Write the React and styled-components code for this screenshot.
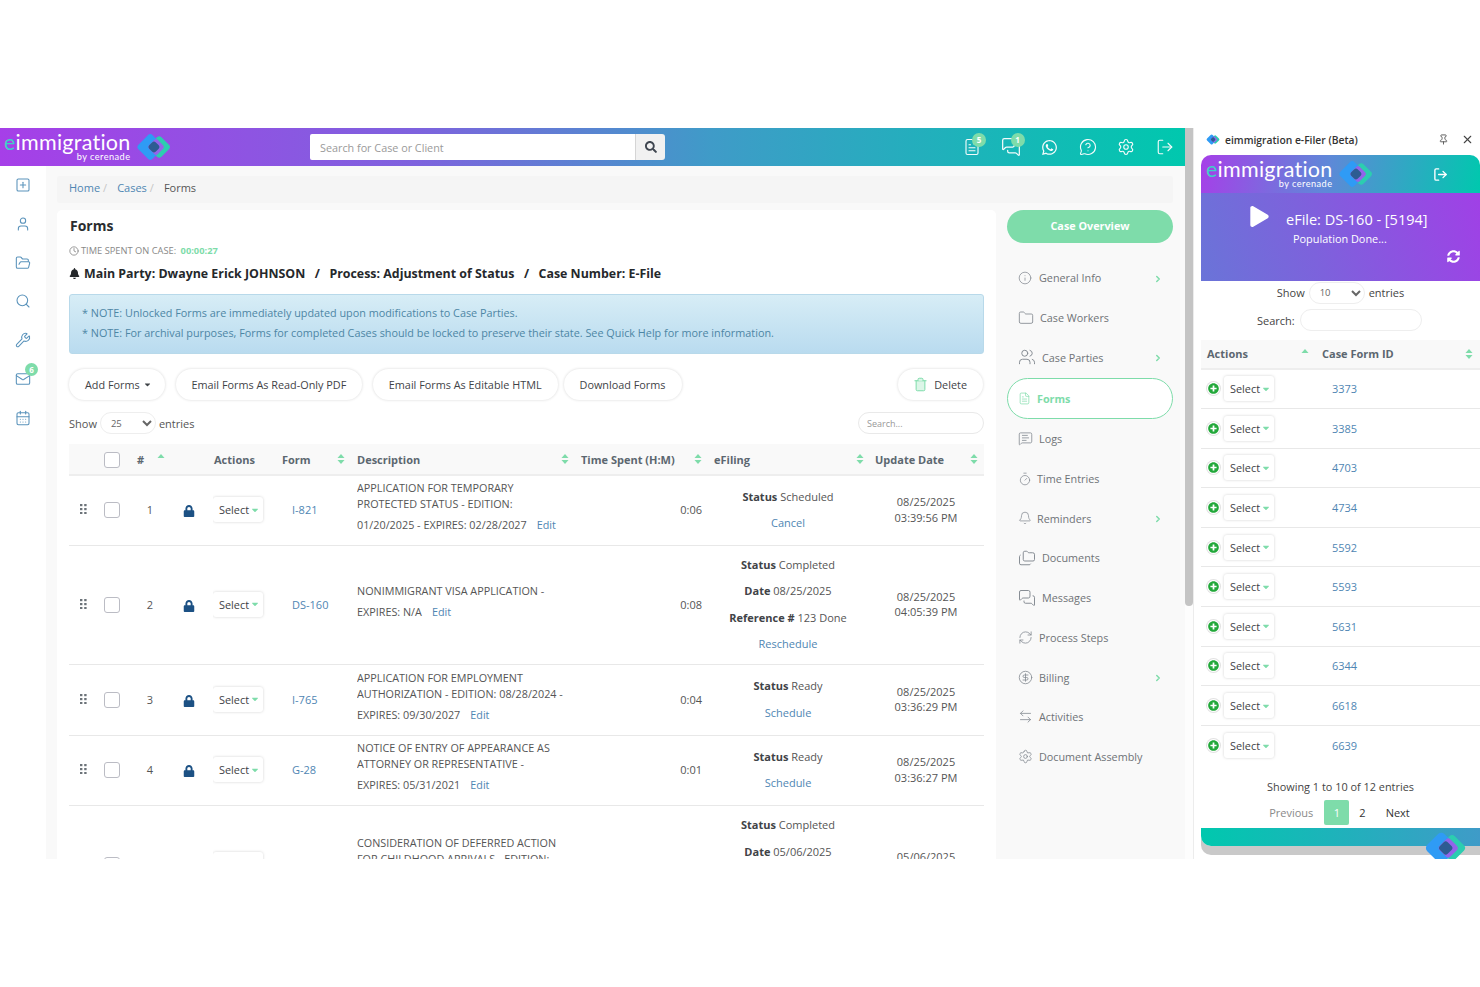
import React from "react";
import styled, {createGlobalStyle} from "styled-components";
import {
  SquarePlus, User, FolderOpen, Search, Wrench, Mail, CalendarDays, FileText, MessagesSquare,
  MessageCircleQuestion, Settings, LogOut, Clock, Info, Folder, Users, MessageSquareText, Timer,
  Bell, Folders, RefreshCw, CircleDollarSign, ArrowLeftRight, ChevronRight, Trash2, Pin, X,
} from "lucide-react";
import {FaWhatsapp, FaBell, FaLock, FaPlay, FaSyncAlt, FaPlusCircle, FaSearch, FaCaretDown} from "react-icons/fa";

const green = "#7edcaa";
const linkBlue = "#4f86b3";
const iconBlue = "#5a93bb";
const textDark = "#454a50";
const brand = "linear-gradient(90deg, #a63fe8 0%, #7e62de 35%, #3f9bc8 60%, #00c8ae 100%)";

const GlobalStyle = createGlobalStyle`
  html, body {
    margin: 0;
    background: #fff;
    font-family: "Open Sans", "Liberation Sans", sans-serif;
    color: ${textDark};
  }
  * { box-sizing: border-box; }
`;

function LogoMark({size = 36}) {
  return (
    <svg width={size} height={size} viewBox="0 0 36 36">
      <rect x="14" y="10" width="16" height="16" rx="3" transform="rotate(45 22 18)" fill="#2ccdb0"/>
      <rect x="4" y="8.5" width="19" height="19" rx="3.5" transform="rotate(45 13.5 18)" fill="#2f9bf5"/>
      <rect x="13" y="12" width="12" height="12" rx="2.5" transform="rotate(45 19 18)" fill="#a45be8" opacity="0.85"/>
      <rect x="12.7" y="13.7" width="8.6" height="8.6" rx="2.2" transform="rotate(45 17 18)" fill="#2d5c92"/>
    </svg>
  );
}

function SortCaret({only}) {
  return (
    <svg width="8" height="12" viewBox="0 0 8 12" fill={green}>
      <path d="M4 1 L7.5 5 H0.5 Z"/>
      {!only && <path d="M4 11 L0.5 7 H7.5 Z"/>}
    </svg>
  );
}

function DragDots() {
  return (
    <svg width="7" height="10" viewBox="0 0 7 10" fill="#6c7379">
      {[0, 4, 8].map(y => (
        <React.Fragment key={y}>
          <rect x="0" y={y} width="2.4" height="2.2"/>
          <rect x="4.2" y={y} width="2.4" height="2.2"/>
        </React.Fragment>
      ))}
    </svg>
  );
}

function Brand({small}) {
  return (
    <BrandBox $small={small}>
      <BrandText>
        <BrandName><em>e</em>immigration</BrandName>
        <BrandBy>by cerenade</BrandBy>
      </BrandText>
      <LogoMark size={38}/>
    </BrandBox>
  );
}

const sideIcons = [SquarePlus, User, FolderOpen, Search, Wrench, Mail, CalendarDays];

const navItems = [
  {label: "General Info", Icon: Info, size: 14, gap: 7, arrow: true},
  {label: "Case Workers", Icon: Folder, size: 16, gap: 6},
  {label: "Case Parties", Icon: Users, size: 18, gap: 6, arrow: true},
  {label: "Forms", Icon: FileText, size: 13, gap: 6, active: true},
  {label: "Logs", Icon: MessageSquareText, size: 15, gap: 6},
  {label: "Time Entries", Icon: Timer, size: 14, gap: 5},
  {label: "Reminders", Icon: Bell, size: 14, gap: 5, arrow: true},
  {label: "Documents", Icon: Folders, size: 18, gap: 6},
  {label: "Messages", Icon: MessagesSquare, size: 18, gap: 6},
  {label: "Process Steps", Icon: RefreshCw, size: 15, gap: 6},
  {label: "Billing", Icon: CircleDollarSign, size: 15, gap: 6, arrow: true},
  {label: "Activities", Icon: ArrowLeftRight, size: 15, gap: 6},
  {label: "Document Assembly", Icon: Settings, size: 15, gap: 6},
];

const rows = [
  {
    id: 1, form: "I-821", height: 70, time: "0:06",
    lines: ["APPLICATION FOR TEMPORARY", "PROTECTED STATUS - EDITION:"],
    last: "01/20/2025 - EXPIRES: 02/28/2027",
    filing: [["Status", "Scheduled"]], action: "Cancel",
    date: "08/25/2025", stamp: "03:39:56 PM",
  },
  {
    id: 2, form: "DS-160", height: 119, time: "0:08",
    lines: ["NONIMMIGRANT VISA APPLICATION -"],
    last: "EXPIRES: N/A",
    filing: [["Status", "Completed"], ["Date", "08/25/2025"], ["Reference #", "123 Done"]], action: "Reschedule",
    date: "08/25/2025", stamp: "04:05:39 PM",
  },
  {
    id: 3, form: "I-765", height: 71, time: "0:04",
    lines: ["APPLICATION FOR EMPLOYMENT", "AUTHORIZATION - EDITION: 08/28/2024 -"],
    last: "EXPIRES: 09/30/2027",
    filing: [["Status", "Ready"]], action: "Schedule",
    date: "08/25/2025", stamp: "03:36:29 PM",
  },
  {
    id: 4, form: "G-28", height: 70, time: "0:01",
    lines: ["NOTICE OF ENTRY OF APPEARANCE AS", "ATTORNEY OR REPRESENTATIVE -"],
    last: "EXPIRES: 05/31/2021",
    filing: [["Status", "Ready"]], action: "Schedule",
    date: "08/25/2025", stamp: "03:36:27 PM",
  },
  {
    id: 5, form: "DACA", height: 120, time: "0:02",
    lines: ["CONSIDERATION OF DEFERRED ACTION", "FOR CHILDHOOD ARRIVALS - EDITION:"],
    last: "EXPIRES: N/A",
    filing: [["Status", "Completed"], ["Date", "05/06/2025"], ["Reference #", "456 Done"]], action: "Reschedule",
    date: "05/06/2025", stamp: "02:14:08 PM",
  },
];

const caseForms = ["3373", "3385", "4703", "4734", "5592", "5593", "5631", "6344", "6618", "6639"];

export default function App() {
  return (
    <>
      <GlobalStyle/>
      <Page>
        <Frame>
          <Main>
            <Header>
              <Brand/>
              <SearchGroup>
                <SearchInput placeholder="Search for Case or Client"/>
                <SearchButton><FaSearch size={12}/></SearchButton>
              </SearchGroup>
              <HeaderIcons>
                <HeaderIcon><FileText size={18} strokeWidth={1.5}/><Badge>5</Badge></HeaderIcon>
                <HeaderIcon><MessagesSquare size={20} strokeWidth={1.5}/><Badge>1</Badge></HeaderIcon>
                <HeaderIcon><FaWhatsapp size={17}/></HeaderIcon>
                <HeaderIcon><MessageCircleQuestion size={18} strokeWidth={1.5}/></HeaderIcon>
                <HeaderIcon><Settings size={18} strokeWidth={1.5}/></HeaderIcon>
                <HeaderIcon><LogOut size={18} strokeWidth={1.5}/></HeaderIcon>
              </HeaderIcons>
            </Header>
            <Body>
              <Side>
                {sideIcons.map((Icon, i) => (
                  <SideIcon key={i}>
                    <Icon size={16} strokeWidth={1.6}/>
                    {Icon === Mail && <SideBadge>6</SideBadge>}
                  </SideIcon>
                ))}
              </Side>
              <Content>
                <Crumbs>
                  <a>Home</a><i>/</i><a>Cases</a><i>/</i><b>Forms</b>
                </Crumbs>
                <Columns>
                  <Card>
                    <CardTitle>Forms</CardTitle>
                    <TimeSpent><Clock size={10}/>TIME SPENT ON CASE: <span>00:00:27</span></TimeSpent>
                    <CaseLine>
                      <FaBell size={11}/>
                      <span>Main Party: Dwayne Erick JOHNSON</span><i>/</i>
                      <span>Process: Adjustment of Status</span><i>/</i>
                      <span>Case Number: E-File</span>
                    </CaseLine>
                    <Note>
                      <p>* NOTE: Unlocked Forms are immediately updated upon modifications to Case Parties.</p>
                      <p>* NOTE: For archival purposes, Forms for completed Cases should be locked to preserve their state. See Quick Help for more information.</p>
                    </Note>
                    <Toolbar>
                      <AddPill>Add Forms <FaCaretDown size={9}/></AddPill>
                      <Pill>Email Forms As Read-Only PDF</Pill>
                      <Pill>Email Forms As Editable HTML</Pill>
                      <DownloadPill>Download Forms</DownloadPill>
                      <DeletePill><Trash2 size={15} color={green} fill="#dcf6e8" strokeWidth={1.6}/> Delete</DeletePill>
                    </Toolbar>
                    <TableTools>
                      <ShowLabel>
                        Show
                        <EntrySelect defaultValue="25"><option>25</option><option>50</option></EntrySelect>
                        entries
                      </ShowLabel>
                      <TableSearch placeholder="Search..."/>
                    </TableTools>
                    <FormsTable>
                      <colgroup>
                        <col width="28"/><col width="30"/><col width="46"/><col width="40"/>
                        <col width="69"/><col width="75"/><col width="224"/><col width="133"/>
                        <col width="161"/><col width="109"/>
                      </colgroup>
                      <thead>
                        <tr>
                          <HeadCell/>
                          <HeadCell $center><Check/></HeadCell>
                          <HeadCell $left={10}><HeadInner $right={8}>#<SortCaret only/></HeadInner></HeadCell>
                          <HeadCell/>
                          <HeadCell $left={1}>Actions</HeadCell>
                          <HeadCell><HeadInner>Form<SortCaret/></HeadInner></HeadCell>
                          <HeadCell><HeadInner>Description<SortCaret/></HeadInner></HeadCell>
                          <HeadCell><HeadInner>Time Spent (H:M)<SortCaret/></HeadInner></HeadCell>
                          <HeadCell><HeadInner $right={11}>eFiling<SortCaret/></HeadInner></HeadCell>
                          <HeadCell><HeadInner $right={6}>Update Date<SortCaret/></HeadInner></HeadCell>
                        </tr>
                      </thead>
                      <tbody>
                        {rows.map(row => (
                          <BodyRow key={row.id} $height={row.height}>
                            <Cell $center><DragDots/></Cell>
                            <Cell $center><Check/></Cell>
                            <Cell $center>{row.id}</Cell>
                            <LockCell $center><FaLock size={12}/></LockCell>
                            <Cell><SelectButton>Select <FaCaretDown size={10} color={green}/></SelectButton></Cell>
                            <Cell><FormLink>{row.form}</FormLink></Cell>
                            <DescCell>
                              {row.lines.map(line => <DescLine key={line}>{line}</DescLine>)}
                              <DescLast>{row.last}<EditLink>Edit</EditLink></DescLast>
                            </DescCell>
                            <TimeCell>{row.time}</TimeCell>
                            <FilingCell>
                              {row.filing.map(([key, value]) => <FilingLine key={key}><b>{key}</b> {value}</FilingLine>)}
                              <FilingLink>{row.action}</FilingLink>
                            </FilingCell>
                            <DateCell>{row.date}<br/>{row.stamp}</DateCell>
                          </BodyRow>
                        ))}
                      </tbody>
                    </FormsTable>
                  </Card>
                  <Nav>
                    <OverviewButton>Case Overview</OverviewButton>
                    <NavList>
                      {navItems.map(({label, Icon, size, gap, arrow, active}) => (
                        <NavItem key={label} $active={active} $gap={gap}>
                          <Icon size={size} strokeWidth={1.3}/>
                          <span>{label}</span>
                          {arrow && <NavArrow><ChevronRight size={10} strokeWidth={3.5}/></NavArrow>}
                        </NavItem>
                      ))}
                    </NavList>
                  </Nav>
                </Columns>
              </Content>
            </Body>
          </Main>
          <ScrollTrack><ScrollThumb/></ScrollTrack>
          <Panel>
            <PanelBar>
              <LogoMark size={15}/>
              <PanelTitle>eimmigration e-Filer (Beta)</PanelTitle>
              <PinMark><Pin size={11} color="#555"/></PinMark>
              <X size={13} color="#444"/>
            </PanelBar>
            <PanelCard>
              <PanelBrand>
                <Brand small/>
                <LogOut size={15} strokeWidth={2.2}/>
              </PanelBrand>
              <PanelHero>
                <HeroPlay><FaPlay size={21}/></HeroPlay>
                <HeroTitle>eFile: DS-160 - [5194]</HeroTitle>
                <HeroSub>Population Done...</HeroSub>
                <HeroSync><FaSyncAlt size={13}/></HeroSync>
              </PanelHero>
              <PanelShow>
                Show
                <EntrySelect defaultValue="10"><option>10</option><option>25</option></EntrySelect>
                entries
              </PanelShow>
              <PanelSearch>Search:<PanelSearchInput/></PanelSearch>
              <PanelHead>
                <span>Actions</span>
                <SortCaret only/>
                <span>Case Form ID</span>
                <SortCaret/>
              </PanelHead>
              {caseForms.map((id, i) => (
                <PanelRow key={id} $last={i === caseForms.length - 1}>
                  <PlusMark><FaPlusCircle size={11}/></PlusMark>
                  <SelectButton>Select <FaCaretDown size={10} color={green}/></SelectButton>
                  <FormLink>{id}</FormLink>
                </PanelRow>
              ))}
              <Showing>Showing 1 to 10 of 12 entries</Showing>
              <Pager>
                <PreviousText>Previous</PreviousText>
                <PageCurrent>1</PageCurrent>
                <PageText>2</PageText>
                <NextText>Next</NextText>
              </Pager>
              <PanelFoot><LogoMark size={46}/></PanelFoot>
            </PanelCard>
          </Panel>
        </Frame>
      </Page>
    </>
  );
}

const Page = styled.div`
  height: 987px;
  padding-top: 128px;
  overflow: hidden;
`;

const Frame = styled.div`
  display: flex;
  height: 731px;
  overflow: hidden;
`;

const Main = styled.div`
  width: 1185px;
  flex: none;
  display: flex;
  flex-direction: column;
  background: #f9f9f9;
`;

const Header = styled.header`
  height: 38px;
  flex: none;
  display: flex;
  align-items: center;
  padding-left: 4px;
  background: ${brand};
`;

const BrandBox = styled.div`
  display: flex;
  align-items: center;
  gap: 6px;
  width: ${({$small}) => $small ? "auto" : "306px"};
  color: #fff;
`;

const BrandText = styled.div`
  display: flex;
  flex-direction: column;
  align-items: flex-end;
`;

const BrandName = styled.div`
  font-family: "Lato", sans-serif;
  font-size: 21.5px;
  line-height: 20px;
  letter-spacing: 0.25px;
  em {
    font-style: normal;
    color: #3ed0c8;
  }
`;

const BrandBy = styled.div`
  font-family: "Lato", sans-serif;
  font-size: 9.2px;
  line-height: 10px;
  letter-spacing: 0.45px;
`;

const SearchGroup = styled.div`
  display: flex;
  width: 355px;
  height: 26px;
`;

const SearchInput = styled.input`
  flex: 1;
  min-width: 0;
  height: 100%;
  border: 0;
  padding: 0 10px;
  border-radius: 2px 0 0 2px;
  background: #fff;
  font: 10.8px "Open Sans", sans-serif;
  &::placeholder { color: #9a9a9a; }
`;

const SearchButton = styled.div`
  width: 30px;
  display: flex;
  align-items: center;
  justify-content: center;
  background: #f1f1f1;
  border-left: 1px solid #d5d5d5;
  border-radius: 0 3px 3px 0;
  color: #3f4650;
`;

const HeaderIcons = styled.div`
  margin-left: auto;
  display: flex;
  gap: 18.6px;
  padding-right: 10px;
`;

const HeaderIcon = styled.div`
  position: relative;
  width: 20px;
  height: 20px;
  display: flex;
  align-items: center;
  justify-content: center;
  color: #f4fbfb;
`;

const Badge = styled.span`
  position: absolute;
  top: -4px;
  right: -4px;
  width: 14px;
  height: 14px;
  border-radius: 50%;
  background: ${green};
  color: #fff;
  font-size: 8px;
  font-weight: 700;
  line-height: 14px;
  text-align: center;
`;

const Body = styled.div`
  flex: 1;
  min-height: 0;
  display: flex;
`;

const Side = styled.nav`
  width: 46px;
  flex: none;
  background: #fff;
  padding-top: 10px;
  display: flex;
  flex-direction: column;
  align-items: center;
  gap: 22.8px;
`;

const SideIcon = styled.div`
  position: relative;
  width: 16px;
  height: 16px;
  color: ${iconBlue};
`;

const SideBadge = styled.span`
  position: absolute;
  top: -7px;
  right: -7px;
  width: 13px;
  height: 13px;
  border-radius: 50%;
  background: ${green};
  color: #fff;
  font-size: 8px;
  font-weight: 700;
  line-height: 13px;
  text-align: center;
`;

const Content = styled.div`
  flex: 1;
  min-width: 0;
  padding: 10px 12px 0 11px;
`;

const Crumbs = styled.div`
  height: 27px;
  display: flex;
  align-items: center;
  padding: 0 0 4px 12px;
  background: #f5f5f5;
  border-radius: 3px;
  font-size: 11px;
  a { color: ${linkBlue}; }
  i { font-style: normal; color: #c6c6c6; margin: 0 10px 0 3px; }
  b { font-weight: 400; color: #555; }
`;

const Columns = styled.div`
  display: flex;
  gap: 11px;
  margin-top: 7px;
`;

const Card = styled.section`
  width: 939px;
  flex: none;
  background: #fff;
  border-radius: 5px;
  padding: 6px 12px 0;
`;

const CardTitle = styled.h2`
  margin: 0 0 0 1px;
  font-size: 14px;
  line-height: 19px;
  font-weight: 700;
  color: #2a2d30;
`;

const TimeSpent = styled.div`
  margin-top: 10px;
  display: flex;
  align-items: center;
  gap: 2px;
  font-size: 9.3px;
  line-height: 12px;
  color: #888;
  white-space: pre;
  span { color: ${green}; font-weight: 700; }
`;

const CaseLine = styled.div`
  margin-top: 8px;
  display: flex;
  align-items: center;
  gap: 3px;
  font-size: 12.4px;
  line-height: 17px;
  font-weight: 700;
  color: #25282b;
  white-space: nowrap;
  svg { margin-right: 1px; }
  i { font-style: normal; margin: 0 6.5px; }
`;

const Note = styled.div`
  margin-top: 12px;
  height: 60px;
  padding: 8px 12px;
  border: 1px solid #b8d9ea;
  border-radius: 3px;
  background: linear-gradient(180deg, #d7edf6 0%, #b9dbef 100%);
  color: #4d86a5;
  font-size: 10.83px;
  p { margin: 0; line-height: 20px; }
`;

const Toolbar = styled.div`
  margin-top: 15px;
  height: 31px;
  display: flex;
  gap: 10.5px;
`;

const Pill = styled.div`
  height: 31px;
  display: flex;
  align-items: center;
  gap: 3px;
  padding: 0 16px 1px;
  border-radius: 16px;
  background: #fff;
  box-shadow: 0 0 3px rgba(0, 0, 0, 0.16);
  font-size: 10.85px;
  color: #3f4347;
  white-space: nowrap;
`;

const AddPill = styled(Pill)`
  width: 96px;
  padding-right: 0;
`;

const DownloadPill = styled(Pill)`
  margin-left: -4.5px;
`;

const DeletePill = styled(Pill)`
  margin-left: auto;
  margin-right: 1px;
  gap: 6px;
  padding: 0 16px 1px 15px;
`;

const TableTools = styled.div`
  margin-top: 11px;
  height: 24px;
  display: flex;
  align-items: center;
  justify-content: space-between;
`;

const ShowLabel = styled.label`
  display: flex;
  align-items: center;
  gap: 3px;
  font-size: 11px;
  color: #555;
`;

const EntrySelect = styled.select`
  width: 56px;
  height: 22px;
  padding: 0 6px;
  background: #fff;
  border: 1px solid #eee;
  border-radius: 11px;
  font: 9.5px "Open Sans", sans-serif;
  color: #666;
`;

const TableSearch = styled.input`
  width: 126px;
  height: 22px;
  padding: 0 8px;
  border: 1px solid #e9e9e9;
  border-radius: 11px;
  font: 9px "Open Sans", sans-serif;
  &::placeholder { color: #999; }
`;

const FormsTable = styled.table`
  width: 915px;
  margin-top: 9px;
  border-collapse: collapse;
  table-layout: fixed;
  font-size: 11px;
`;

const HeadCell = styled.th`
  height: 31px;
  padding: 0 0 0 ${({$left}) => $left || 0}px;
  background: #f9f9f9;
  border-bottom: 2px solid #eee;
  text-align: ${({$center}) => $center ? "center" : "left"};
  font-size: 11px;
  font-weight: 700;
  color: #5c6770;
`;

const HeadInner = styled.div`
  display: flex;
  align-items: center;
  justify-content: space-between;
  padding-right: ${({$right}) => $right ?? 12}px;
`;

const Check = styled.span`
  display: inline-block;
  width: 16px;
  height: 16px;
  vertical-align: middle;
  border: 1px solid #bbbcc4;
  border-radius: 3px;
  background: #fff;
`;

const BodyRow = styled.tr`
  height: ${({$height}) => $height}px;
  border-bottom: 1px solid #e8e8e8;
`;

const Cell = styled.td`
  padding: 0 0 1px;
  text-align: ${({$center}) => $center ? "center" : "left"};
  vertical-align: middle;
  color: #555;
  overflow: hidden;
`;

const LockCell = styled(Cell)`
  padding-right: 8px;
  color: #1c5184;
  svg { vertical-align: middle; }
`;

const SelectButton = styled.div`
  display: inline-flex;
  align-items: center;
  justify-content: space-between;
  width: 50px;
  height: 25px;
  padding: 0 3px 0 6px;
  border-radius: 3px;
  background: #fff;
  box-shadow: 0 0 3px rgba(0, 0, 0, 0.18);
  font-size: 10.9px;
  color: #3e4246;
`;

const FormLink = styled.a`
  color: ${linkBlue};
  font-size: 11px;
  margin-left: 10px;
`;

const DescCell = styled(Cell)`
  padding-bottom: 7px;
`;

const DescLine = styled.div`
  line-height: 16px;
  font-size: 10.8px;
  white-space: nowrap;
`;

const DescLast = styled(DescLine)`
  margin-top: 5px;
`;

const EditLink = styled.a`
  margin-left: 10px;
  color: ${linkBlue};
`;

const TimeCell = styled(Cell)`
  text-align: right;
  padding-right: 12px;
`;

const FilingCell = styled(Cell)`
  text-align: center;
  padding: 0 13px 0 0;
`;

const FilingLine = styled.div`
  line-height: 26.3px;
  white-space: nowrap;
  b { color: #3f4347; }
`;

const FilingLink = styled(FilingLine)`
  color: ${linkBlue};
`;

const DateCell = styled(Cell)`
  line-height: 15.5px;
  text-align: center;
  padding-right: 7px;
`;

const Nav = styled.aside`
  width: 166px;
  flex: none;
`;

const OverviewButton = styled.div`
  height: 33px;
  padding-bottom: 2px;
  display: flex;
  align-items: center;
  justify-content: center;
  border-radius: 17px;
  background: ${green};
  color: #fff;
  font-size: 10.8px;
  font-weight: 700;
`;

const NavList = styled.div`
  margin-top: 15px;
  display: flex;
  flex-direction: column;
`;

const NavItem = styled.div`
  position: relative;
  height: ${({$active}) => $active ? 41 : 39.7}px;
  margin-top: ${({$active}) => $active ? 1 : 0}px;
  display: flex;
  align-items: center;
  gap: ${({$gap}) => $gap}px;
  padding-left: ${({$active}) => $active ? 10 : 11}px;
  border-radius: 21px;
  border: ${({$active}) => $active ? `1px solid ${green}` : "0"};
  background: ${({$active}) => $active ? "#fff" : "transparent"};
  color: ${({$active}) => $active ? green : "#6f7377"};
  font-size: 10.8px;
  font-weight: ${({$active}) => $active ? 700 : 400};
  svg { color: ${({$active}) => $active ? green : "#858b92"}; flex: none; }
`;

const NavArrow = styled.span`
  position: absolute;
  right: 10px;
  top: 50%;
  margin-top: -4px;
  display: flex;
  svg { color: ${green}; }
`;

const ScrollTrack = styled.div`
  width: 8px;
  flex: none;
  background: #fdfdfd;
`;

const ScrollThumb = styled.div`
  height: 478px;
  background: #c4c4c4;
  border-radius: 0 0 4px 4px;
`;

const Panel = styled.div`
  flex: 1;
  min-width: 0;
  padding-left: 7px;
  border-left: 1px solid #ececec;
  background: #fff;
`;

const PanelBar = styled.div`
  height: 27px;
  display: flex;
  align-items: center;
  gap: 4px;
  padding: 0 6px 4px 5px;
`;

const PanelTitle = styled.span`
  flex: 1;
  font-size: 10.3px;
  color: #333;
  font-weight: 600;
`;

const PinMark = styled.span`
  display: flex;
  margin-right: 8px;
`;

const PanelCard = styled.div`
  position: relative;
  display: flex;
  flex-direction: column;
  height: 700px;
`;

const PanelBrand = styled.div`
  height: 38px;
  flex: none;
  display: flex;
  align-items: center;
  justify-content: space-between;
  padding: 0 32px 0 5px;
  border-radius: 10px 10px 0 0;
  background: linear-gradient(100deg, #a63fe8 0%, #5f88d8 45%, #00c8ae 100%);
  color: #fff;
`;

const PanelHero = styled.div`
  position: relative;
  height: 88px;
  flex: none;
  background: linear-gradient(250deg, #a040e6 0%, #7d62dc 60%, #6a74d8 100%);
  color: #fff;
  text-align: center;
`;

const HeroPlay = styled.span`
  position: absolute;
  left: 48px;
  top: 13px;
`;

const HeroTitle = styled.div`
  position: absolute;
  left: 85px;
  top: 15px;
  font-size: 14.5px;
  line-height: 24px;
  white-space: nowrap;
`;

const HeroSub = styled.div`
  position: absolute;
  left: 92px;
  top: 37px;
  font-size: 10.9px;
  line-height: 17px;
`;

const HeroSync = styled.span`
  position: absolute;
  right: 20px;
  top: 53px;
`;

const PanelShow = styled.label`
  height: 23px;
  display: flex;
  align-items: center;
  justify-content: center;
  gap: 4px;
  font-size: 11px;
  color: #444;
`;

const PanelSearch = styled.label`
  margin-top: 4px;
  height: 24px;
  padding-left: 56px;
  display: flex;
  align-items: center;
  gap: 5px;
  font-size: 11px;
  color: #444;
`;

const PanelSearchInput = styled.input`
  width: 122px;
  height: 22px;
  border: 1px solid #eee;
  border-radius: 11px;
`;

const PanelHead = styled.div`
  margin-top: 8px;
  height: 29.5px;
  flex: none;
  display: grid;
  grid-template-columns: 94px 21px 1fr 8px;
  align-items: center;
  padding: 0 7px 0 6px;
  background: #f9f9f9;
  border-bottom: 2px solid #eee;
  font-size: 11px;
  font-weight: 700;
  color: #5c6770;
`;

const PanelRow = styled.div`
  height: 39.6px;
  flex: none;
  display: grid;
  grid-template-columns: 17px 98px 1fr;
  align-items: center;
  padding-left: 6px;
  border-bottom: ${({$last}) => $last ? "0" : "1px solid #e8e8e8"};
`;

const PlusMark = styled.span`
  width: 13px;
  height: 13px;
  display: flex;
  align-items: center;
  justify-content: center;
  border-radius: 50%;
  color: #22a83a;
  box-shadow: 0 0 0 1px #e2e2e2;
`;

const Showing = styled.div`
  margin-top: 14px;
  text-align: center;
  font-size: 10.9px;
  line-height: 16px;
  color: #444;
`;

const Pager = styled.div`
  margin-top: 5px;
  height: 25px;
  flex: none;
  display: flex;
  align-items: center;
  justify-content: center;
  gap: 10px;
  padding-right: 2px;
  font-size: 11px;
`;

const PageText = styled.span`
  color: #333;
`;

const PreviousText = styled(PageText)`
  margin-right: 1px;
  color: #8a8a8a;
`;

const NextText = styled(PageText)`
  margin-left: 10px;
`;

const PageCurrent = styled.span`
  width: 25px;
  height: 25px;
  display: flex;
  align-items: center;
  justify-content: center;
  border-radius: 2px;
  background: ${green};
  color: #fff;
`;

const PanelFoot = styled.div`
  position: relative;
  margin-top: 3px;
  height: 18px;
  flex: none;
  border-radius: 0 0 0 10px;
  background: linear-gradient(90deg, #00c8ae 0%, #3f9bc8 100%);
  box-shadow: 0 9px 0 #c9c9c9;
  svg { position: absolute; right: 10px; top: -3px; }
`;
